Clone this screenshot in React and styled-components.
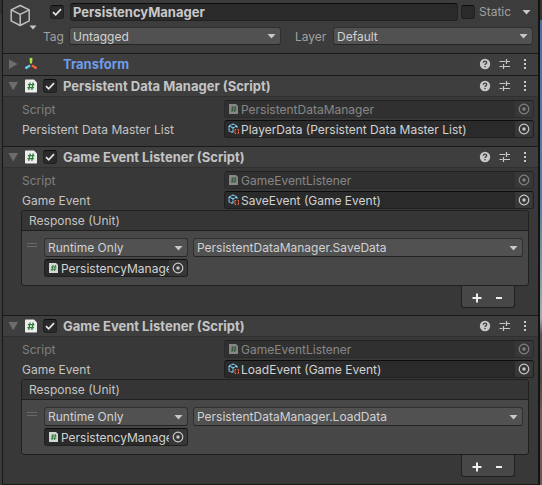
import React, { useId } from "react";
import styled, { createGlobalStyle } from "styled-components";

const GlobalStyle = createGlobalStyle`
  *, *::before, *::after { box-sizing: border-box; }
  body { margin: 0; background: #383838; }
  body, button, input, select {
    font-family: Inter, "Liberation Sans", sans-serif;
    font-size: 12px;
    line-height: 16px;
    color: #c4c4c4;
  }
  h2, h3 { margin: 0; font-size: inherit; }
`;

const Editor = styled.div`
  display: grid;
  grid-template-columns: 2px minmax(0, 1fr) 2px;
  min-height: 100vh;
`;
const LeftEdge = styled.div`
  background: linear-gradient(#303030 14px, #3a3a3a 14px);
`;
const SceneEdge = styled.div`
  background: linear-gradient(#333 20px, #4f6d9c 20px, #5f7c9f 200px, #7e98a8 270px, #a3adae 318px, #55585a 334px, #4c4a49 380px, #6b625c 416px, #625a55);
`;
const Inspector = styled.main`
  display: flex;
  flex-direction: column;
  background: #383838;
  border-left: 1px solid #171717;
  border-right: 2px solid #131313;
  border-bottom: 1px solid #1a1a1a;
`;

const ObjectHeader = styled.header`
  display: flex;
  gap: 4px;
  padding: 3px 2px 8px 5px;
  background: #3c3c3c;
`;
const ObjectIcon = styled.div`
  flex: 0 0 auto;
  width: 31px;
`;
const HeaderLines = styled.div`
  flex: 1;
  min-width: 0;
  display: flex;
  flex-direction: column;
  gap: 6px;
`;
const NameLine = styled.div`
  display: flex;
  align-items: center;
  padding-left: 7px;
`;
const StaticLabel = styled.label`
  display: flex;
  align-items: center;
  gap: 4px;
  width: 57px;
  color: #a0a0a0;
`;
const PickLine = styled.div`
  display: grid;
  grid-template-columns: 26px minmax(0, 212fr) 52px minmax(0, 200fr);
  align-items: center;
  padding-right: 3px;
`;
const PickLabel = styled.label`
  color: #a0a0a0;
  padding-top: 2px;
  padding-left: ${(p) => (p.$inset ? "14px" : 0)};
`;

const NameInput = styled.input`
  flex: 1;
  min-width: 0;
  height: 18px;
  margin: 0 3px 0 6px;
  padding: 0 2px;
  border: 1px solid #212121;
  border-top-color: #0d0d0d;
  border-radius: 3px;
  background: #2a2a2a;
  font-size: 13px;
  font-weight: 700;
  color: #c8c8c8;
`;

const Stack = styled.span`
  display: grid;
  align-items: center;
  > * { grid-area: 1 / 1; }
  > svg { justify-self: ${(p) => (p.$end ? "end" : "center")}; pointer-events: none; }
`;
const Box = styled.input`
  appearance: none;
  width: 14px;
  height: 14px;
  margin: 0;
  border: 1px solid #212121;
  border-top-color: #0d0d0d;
  border-radius: 3px;
  background: #2a2a2a;
  & + svg { visibility: hidden; }
  &:checked + svg { visibility: visible; }
`;
const Select = styled.select`
  appearance: none;
  width: 100%;
  height: ${(p) => (p.$tall ? "19px" : "18px")};
  padding: 1px 16px 0 3px;
  border: 1px solid #303030;
  border-bottom-color: #242424;
  border-radius: 3px;
  background: #515151;
  color: #d2d2d2;
`;

const Component = styled.section`
  border-top: 1px solid #1a1a1a;
`;
const TitleBar = styled.div`
  display: flex;
  align-items: center;
  height: ${(p) => (p.$plain ? "21px" : "20px")};
  padding: 0 6px ${(p) => (p.$plain ? "1px" : 0)} 4px;
  background: #3e3e3e;
`;
const IconButton = styled.button`
  display: grid;
  place-items: center;
  width: ${(p) => (p.$wide ? "18px" : "14px")};
  height: 16px;
  padding: 0;
  border: 0;
  background: none;
`;
const TypeIcon = styled.span`
  display: grid;
  place-items: center;
  width: 20px;
`;
const Enabled = styled.span`
  display: flex;
  width: 22px;
  padding-left: 2px;
`;
const Title = styled.h2`
  flex: 1;
  font-size: 13px;
  font-weight: 700;
  white-space: nowrap;
  color: ${(p) => (p.$accent ? "#6f9ce8" : "#c4c4c4")};
`;
const Actions = styled.div`
  display: flex;
  gap: 6px;
`;
const Body = styled.div`
  border-top: 1px solid #303030;
  padding: 3px 4px ${(p) => (p.$list ? "7px" : "8px")} 18px;
`;
const Fields = styled.div`
  display: flex;
  flex-direction: column;
  gap: 2px;
`;
const FieldRow = styled.div`
  display: grid;
  grid-template-columns: 202px minmax(0, 1fr);
  align-items: center;
  padding-left: 1px;
  opacity: ${(p) => (p.$disabled ? 0.5 : 1)};
`;
const FieldLabel = styled.label`
  padding-top: 2px;
  white-space: nowrap;
`;
const ObjectBox = styled.div`
  display: flex;
  align-items: center;
  height: 18px;
  padding-left: 3px;
  border: 1px solid #202020;
  border-top-color: #0d0d0d;
  border-radius: 3px;
  background: #2a2a2a;
  overflow: hidden;
  > svg { flex: 0 0 auto; }
`;
const ObjectInput = styled.input`
  flex: 1;
  min-width: 0;
  height: 16px;
  padding: 1px 0 0 1px;
  border: 0;
  background: none;
  color: #d2d2d2;
`;
const Picker = styled.button`
  display: grid;
  place-items: center;
  width: 18px;
  height: 16px;
  padding: 0;
  border: 0;
  background: #373737;
`;

const ListBox = styled.section`
  margin: 1px 5px 0 0;
  border: 1px solid #1f1f1f;
  border-radius: 3px;
  background: #474747;
  overflow: hidden;
`;
const ListTitle = styled.h3`
  height: 20px;
  padding: 2px 7px 0;
  font-weight: 400;
  background: #353535;
  border-bottom: 1px solid #1f1f1f;
`;
const Listener = styled.div`
  display: grid;
  grid-template-columns: 17px 144px minmax(0, 1fr);
  gap: 2px 5px;
  padding: 7px 5px 8px 0;
`;
const Handle = styled.span`
  padding: 5px 0 0 5px;
  display: grid;
  align-content: start;
  gap: 2px;
  width: 15px;
  &::before, &::after { content: ""; height: 1px; background: #6a6a6a; }
`;
const TargetSlot = styled.div`
  grid-column: 2;
`;
const ListFooter = styled.div`
  display: flex;
  width: 54px;
  height: 22px;
  margin: 0 19px 0 auto;
  padding: 0 4px;
  border: 1px solid #1f1f1f;
  border-top: 0;
  border-radius: 0 0 3px 3px;
  background: #474747;
`;
const FooterButton = styled.button`
  flex: 1;
  display: grid;
  place-items: center;
  padding: 0;
  border: 0;
  background: none;
`;

const Tick = () => (
  <svg width="14" height="14" viewBox="0 0 14 14" fill="none" stroke="#e6e6e6" strokeWidth="1.7">
    <path d="M3 7.2 5.7 9.8 11 4.2" />
  </svg>
);
const Caret = () => (
  <svg width="18" height="10" viewBox="0 0 18 10">
    <path d="M4.500 3h8l-4 4.500z" fill="#c8c8c8" />
  </svg>
);
const Fold = ({ open }) => (
  <svg width="12" height="12" viewBox="0 0 12 12" fill="#6d6d6d">
    <path d={open ? "M.500 2h9.500L5.200 10.500z" : "M1 1.500v9.500L9.500 6z"} />
  </svg>
);
const Cube = () => (
  <svg width="30" height="30" viewBox="0 0 30 30" fill="none">
    <g stroke="#c0c0c0" strokeWidth="1.5" strokeLinejoin="round">
      <path d="M12.200 2.500 21.200 6.900v11L12.200 22.500l-9-4.600v-11z" />
      <path d="M3.200 6.900 12.200 11.400l9-4.500M12.200 11.400v11" />
    </g>
    <path d="M21.500 22.500h7l-3.500 4z" fill="#c8c8c8" />
  </svg>
);
const Axes = () => (
  <svg width="14" height="14" viewBox="0 0 14 14">
    <path d="M5.500 1.500Q7 0 8.500 1.500L8 6.500H6z" fill="#a6e83c" />
    <path d="M5.800 7.600 6.600 9.200 2.600 12.200Q.700 12 1 10z" fill="#67cdf2" />
    <path d="M8.200 7.600 7.400 9.200l4 3q1.900-.200 1.600-2.200z" fill="#f4633a" />
  </svg>
);
const ScriptIcon = () => (
  <svg width="14" height="14" viewBox="0 0 14 14">
    <path d="M1 1.200Q1 .500 1.700.500H10L13 3.500v9.300q0 .700-.700.700H1.700q-.700 0-.700-.700z" fill="#ececec" />
    <path d="M6.200 3.500 4.700 10.800M9.300 3.500 7.800 10.800M3.800 5.700h6.600M3.400 8.600H10" stroke="#2e7d3a" strokeWidth="1.300" fill="none" />
  </svg>
);
const SmallScriptIcon = () => (
  <svg width="12" height="12" viewBox="0 0 12 12">
    <path d="M1 1H8L10 3V11H1z" fill="#d4d8d4" />
    <path d="M5 3 4 9M7.500 3 6.500 9M3 5h5.500M2.800 7.200h5.500" stroke="#3c7d48" strokeWidth="1.100" fill="none" />
  </svg>
);
const AssetIcon = () => (
  <svg width="12" height="12" viewBox="0 0 12 12" fill="none">
    <path d="M5 1 9 2.800v2M5 1 1 2.800v5l4 2M1 2.800l4 2 4-2M5 4.800v5" stroke="#7fcdf3" strokeWidth="1.200" strokeDasharray="1.800 .500" />
    <path d="M8 6.500H7v1.500L6.500 8.500 7 9v1.500h1M9.500 6.500h1v1.500l.500.500-.500.500v1.500h-1" stroke="#e8653f" strokeWidth="1.100" strokeDasharray="1.300 .500" />
  </svg>
);
const Target = () => (
  <svg width="12" height="12" viewBox="0 0 12 12">
    <circle cx="6" cy="6" r="4.800" fill="none" stroke="#c8c8c8" strokeWidth="1.200" />
    <circle cx="6" cy="6" r="1.700" fill="#c8c8c8" />
  </svg>
);
const Help = () => (
  <svg width="12" height="12" viewBox="0 0 12 12">
    <circle cx="6" cy="6" r="5.200" fill="#c8c8c8" />
    <path d="M4.300 4.700Q4.400 3.200 6 3.200T7.700 4.600Q7.700 5.400 6.800 5.800 6 6.200 6 7.100M6 8v1.300" fill="none" stroke="#3e3e3e" strokeWidth="1.300" />
  </svg>
);
const Preset = () => (
  <svg width="12" height="12" viewBox="0 0 12 12" stroke="#c8c8c8" strokeWidth="1.200" fill="none">
    <path d="M.500 3.500h6M8 3.500h3M7.500 1v5M.500 8.500h3M5 8.500h6M4.500 6v5" />
  </svg>
);
const Dots = () => (
  <svg width="12" height="12" viewBox="0 0 12 12" fill="#c8c8c8">
    <path d="M5 1h2v2H5zM5 5h2v2H5zM5 9h2v2H5z" />
  </svg>
);
const Sign = ({ plus }) => (
  <svg width="12" height="12" viewBox="0 0 12 12" stroke="#eee" strokeWidth="2">
    <path d={plus ? "M1.500 7h9M6 2.500v9" : "M3 7h6"} />
  </svg>
);

function CheckBox(props) {
  return (
    <Stack>
      <Box type="checkbox" {...props} />
      <Tick />
    </Stack>
  );
}

function DropDown({ id, label, value, tall }) {
  return (
    <Stack $end>
      <Select id={id} aria-label={label} $tall={tall} defaultValue={value}>
        <option>{value}</option>
      </Select>
      <Caret />
    </Stack>
  );
}

function ObjectField({ id, label, value, script, disabled }) {
  return (
    <ObjectBox>
      {script ? <SmallScriptIcon /> : <AssetIcon />}
      <ObjectInput id={id} aria-label={label} value={value} readOnly />
      <Picker type="button" aria-label="Select object" disabled={disabled}>
        <Target />
      </Picker>
    </ObjectBox>
  );
}

function Field({ label, value, script, disabled }) {
  const id = useId();
  return (
    <FieldRow $disabled={disabled}>
      <FieldLabel htmlFor={id}>{label}</FieldLabel>
      <ObjectField id={id} value={value} script={script} disabled={disabled} />
    </FieldRow>
  );
}

function ComponentPanel({ title, transform, list, children }) {
  return (
    <Component>
      <TitleBar $plain={transform}>
        <IconButton type="button" aria-label={`Toggle ${title}`}>
          <Fold open={!transform} />
        </IconButton>
        <TypeIcon>{transform ? <Axes /> : <ScriptIcon />}</TypeIcon>
        <Enabled>{!transform && <CheckBox defaultChecked aria-label={`Enable ${title}`} />}</Enabled>
        <Title $accent={transform}>{title}</Title>
        <Actions>
          <IconButton type="button" aria-label="Help"><Help /></IconButton>
          <IconButton type="button" aria-label="Presets"><Preset /></IconButton>
          <IconButton type="button" aria-label="More"><Dots /></IconButton>
        </Actions>
      </TitleBar>
      {children && <Body $list={list}>{children}</Body>}
    </Component>
  );
}

function EventListener({ event, method }) {
  return (
    <ComponentPanel title="Game Event Listener (Script)" list>
      <Fields>
        <Field label="Script" value="GameEventListener" script disabled />
        <Field label="Game Event" value={event} />
      </Fields>
      <ListBox>
        <ListTitle>Response (Unit)</ListTitle>
        <Listener>
          <Handle />
          <DropDown label="Call state" value="Runtime Only" tall />
          <DropDown label="Method" value={method} tall />
          <TargetSlot>
            <ObjectField label="Target" value="PersistencyManager" script />
          </TargetSlot>
        </Listener>
      </ListBox>
      <ListFooter>
        <FooterButton type="button" aria-label="Add response"><Sign plus /></FooterButton>
        <FooterButton type="button" aria-label="Remove response"><Sign /></FooterButton>
      </ListFooter>
    </ComponentPanel>
  );
}

export default function App() {
  return (
    <>
      <GlobalStyle />
      <Editor>
        <LeftEdge />
        <Inspector>
          <ObjectHeader>
            <ObjectIcon><Cube /></ObjectIcon>
            <HeaderLines>
              <NameLine>
                <CheckBox defaultChecked aria-label="Active" />
                <NameInput aria-label="Name" defaultValue="PersistencyManager" />
                <StaticLabel>
                  <CheckBox />
                  Static
                </StaticLabel>
                <IconButton type="button" aria-label="Static options" $wide><Caret /></IconButton>
              </NameLine>
              <PickLine>
                <PickLabel htmlFor="tag">Tag</PickLabel>
                <DropDown id="tag" value="Untagged" />
                <PickLabel htmlFor="layer" $inset>Layer</PickLabel>
                <DropDown id="layer" value="Default" />
              </PickLine>
            </HeaderLines>
          </ObjectHeader>
          <ComponentPanel title="Transform" transform />
          <ComponentPanel title="Persistent Data Manager (Script)">
            <Fields>
              <Field label="Script" value="PersistentDataManager" script disabled />
              <Field label="Persistent Data Master List" value="PlayerData (Persistent Data Master List)" />
            </Fields>
          </ComponentPanel>
          <EventListener event="SaveEvent (Game Event)" method="PersistentDataManager.SaveData" />
          <EventListener event="LoadEvent (Game Event)" method="PersistentDataManager.LoadData" />
        </Inspector>
        <SceneEdge />
      </Editor>
    </>
  );
}
